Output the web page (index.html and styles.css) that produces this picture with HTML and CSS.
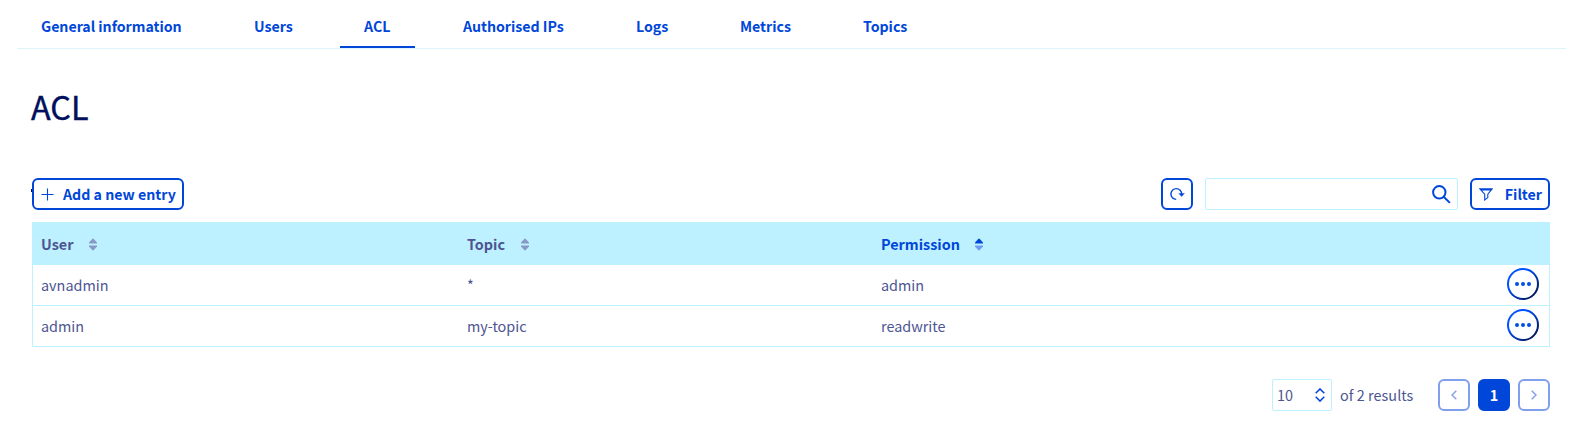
FILE: index.html
```html
<!DOCTYPE html>
<html lang="en">
<head>
<meta charset="utf-8">
<title>ACL</title>
<link rel="stylesheet" href="styles.css">
</head>
<body>
<nav class="tabs">
  <a class="tab tab-general"><span>General information</span></a>
  <a class="tab tab-users"><span>Users</span></a>
  <a class="tab tab-acl active"><span>ACL</span></a>
  <a class="tab tab-ips"><span>Authorised IPs</span></a>
  <a class="tab tab-logs"><span>Logs</span></a>
  <a class="tab tab-metrics"><span>Metrics</span></a>
  <a class="tab tab-topics"><span>Topics</span></a>
</nav>
<main class="content">
  <h1 class="title">ACL</h1>
  <div class="toolbar">
    <button class="btn add"><svg class="icon-plus" width="13" height="13" viewBox="0 0 13 13"><path d="M6.5 .5v12M.5 6.5h12"/></svg><span>Add a new entry</span></button>
    <div class="tools">
      <button class="btn square" aria-label="Refresh"><svg width="16" height="16" viewBox="0 0 16 16"><path d="M7.2 13.4A5.4 5.4 0 1 1 12.7 8" fill="none" stroke="currentColor" stroke-width="1.4"/><path d="M9.8 7.4h5.6L12.6 10.6z" fill="currentColor" stroke="currentColor" stroke-width=".4"/></svg></button>
      <div class="search"><svg width="19" height="19" viewBox="0 0 19 19"><circle cx="7.3" cy="7.3" r="6.2"/><path d="M11.7 11.7l6.2 6.2"/></svg></div>
      <button class="btn filter"><svg width="14" height="13" viewBox="0 0 14 13"><path d="M.9 .9h12.2L8.8 6.2v3.4L5.7 12V6.2zM2 2h10"/></svg><span>Filter</span></button>
    </div>
  </div>
  <div class="table">
    <div class="row head">
      <div class="cell"><span>User</span><svg class="sort" width="8" height="13" viewBox="0 0 8 13"><path d="M0 4.4L3.2 1Q4 .2 4.8 1L8 4.4V5.4H0z"/><path d="M0 7.6h8v1L4.8 12Q4 12.8 3.2 12L0 8.6z"/></svg></div>
      <div class="cell"><span>Topic</span><svg class="sort" width="8" height="13" viewBox="0 0 8 13"><path d="M0 4.4L3.2 1Q4 .2 4.8 1L8 4.4V5.4H0z"/><path d="M0 7.6h8v1L4.8 12Q4 12.8 3.2 12L0 8.6z"/></svg></div>
      <div class="cell sorted"><span>Permission</span><svg class="sort" width="8" height="13" viewBox="0 0 8 13"><path d="M0 4.4L3.2 1Q4 .2 4.8 1L8 4.4V5.4H0z"/><path class="dim" d="M0 7.6h8v1L4.8 12Q4 12.8 3.2 12L0 8.6z"/></svg></div>
      <div></div>
    </div>
    <div class="row">
      <div class="cell"><span>avnadmin</span></div><div class="cell"><span>*</span></div><div class="cell"><span>admin</span></div>
      <div class="more"><i></i><i></i><i></i></div>
    </div>
    <div class="row">
      <div class="cell"><span>admin</span></div><div class="cell"><span>my-topic</span></div><div class="cell"><span>readwrite</span></div>
      <div class="more"><i></i><i></i><i></i></div>
    </div>
  </div>
  <div class="pager">
    <div class="select"><span>10</span><svg width="10" height="14" viewBox="0 0 10 14"><path d="M.7 5.2L5 .9l4.3 4.3M.7 8.8L5 13.1l4.3-4.3"/></svg></div>
    <span class="results">of 2 results</span>
    <button class="page off" aria-label="Previous"><svg width="6" height="10" viewBox="0 0 6 10"><path d="M5.3 .7L1 5l4.3 4.3"/></svg></button>
    <button class="page current"><span>1</span></button>
    <button class="page off" aria-label="Next"><svg width="6" height="10" viewBox="0 0 6 10"><path d="M.7 .7L5 5 .7 9.3"/></svg></button>
  </div>
</main>
</body>
</html>
```
FILE: styles.css
```css
* { box-sizing: border-box; }
body {
  margin: 0;
  background: #fff;
  color: #4d5592;
  font: 14.4px/20px "Noto Sans CJK SC", "Noto Sans", sans-serif;
}
button { margin: 0; font: inherit; background: #fff; white-space: nowrap; }
svg { display: block; flex: none; }
.tabs {
  display: flex;
  gap: 24px;
  height: 49px;
  margin: 0 8px 0 17px;
  border-bottom: 1px solid #def4fd;
}
.tab {
  height: 48px;
  padding: 16px 0 0 24px;
  color: #0047d9;
  font-size: 14.2px;
  letter-spacing: -0.03px;
  font-weight: 700;
  white-space: nowrap;
  border-bottom: 2px solid transparent;
}
.active { border-color: #0047d9; }
.tab-general { width: 189px; }
.tab-users { width: 86px; }
.tab-acl { width: 75px; }
.tab-ips { width: 149px; }
.tab-logs { width: 80px; }
.tab-metrics { width: 99px; }
.tab-topics { width: 92px; }
.content { padding: 0 24px 0 32px; }
.title {
  margin: 0 0 0 -1px;
  padding-top: 34px;
  height: 129px;
  color: #00105c;
  font-size: 32.3px;
  font-weight: 400;
  -webkit-text-stroke: 0.4px #00105c;
  line-height: 46px;
}
.toolbar { position: relative; display: flex; justify-content: space-between; height: 44px; }
.toolbar::before {
  content: "";
  position: absolute;
  left: -1px;
  top: 11px;
  width: 1px;
  height: 3px;
  background: #00105c;
}
.tools { display: flex; gap: 12px; }
.btn {
  display: flex;
  align-items: center;
  height: 32px;
  border: 2px solid #0047d9;
  border-radius: 6px;
  color: #0047d9;
  font-size: 14.2px;
  font-weight: 700;
}
.add { width: 152px; padding: 0 0 0 7px; gap: 9px; }
.icon-plus { fill: none; stroke: currentColor; stroke-width: 1.1; }
.square { width: 32px; padding: 0; justify-content: center; }
.search {
  display: flex;
  align-items: center;
  justify-content: flex-end;
  width: 253px;
  height: 32px;
  padding-right: 6px;
  border: 1px solid #bef1ff;
  border-radius: 2px;
}
.search svg { fill: none; stroke: #0047d9; stroke-width: 2; }
.filter { width: 80px; padding: 0 6px 0 7px; justify-content: space-between; }
.filter svg { fill: none; stroke: currentColor; stroke-width: 1.1; }
.table { border: 1px solid #bef1ff; border-top: 0; }
.row {
  display: grid;
  grid-template-columns: 426px 414px 1fr 42px;
  height: 41px;
  border-top: 1px solid #bef1ff;
}
.row.head { height: 43px; background: #bef1ff; font-weight: 700; border: 0; }
.head + .row { border-top: 0; height: 40px; }
.cell { display: flex; align-items: center; padding-left: 8px; }
.sort { margin: 1px 0 0 15.5px; fill: #8799c6; }
.sorted { color: #0047d9; }
.sorted .sort { fill: #0047d9; }
.sorted .dim { fill: #6e9bf0; }
.more {
  display: flex;
  align-items: center;
  justify-content: center;
  gap: 2px;
  width: 32px;
  height: 32px;
  margin-top: 3px;
  border: 2px solid transparent;
  border-radius: 50%;
  background: linear-gradient(#fff, #fff) padding-box, linear-gradient(135deg, #0050ff 35%, #00185e 85%) border-box;
}
.more i { width: 4px; height: 4px; border-radius: 50%; background: #0050e6; }
.pager { display: flex; align-items: center; justify-content: flex-end; margin-top: 32px; height: 32px; }
.select {
  display: flex;
  align-items: center;
  justify-content: space-between;
  width: 60px;
  height: 32px;
  padding: 0 6px 0 4px;
  border: 1px solid #bef1ff;
  border-radius: 2px;
}
.select svg { fill: none; stroke: #0047d9; stroke-width: 1.5; }
.results { width: 98px; margin-left: 8px; white-space: nowrap; letter-spacing: .05px; }
.page {
  display: flex;
  align-items: center;
  justify-content: center;
  width: 32px;
  height: 32px;
  padding: 0;
  border: 2px solid #809fec;
  border-radius: 6px;
}
.page + .page { margin-left: 8px; }
.page svg { fill: none; stroke: #809fec; stroke-width: 1.4; }
.current { background: #0047d9; border-color: #0047d9; color: #fff; font-weight: 700; }
```
